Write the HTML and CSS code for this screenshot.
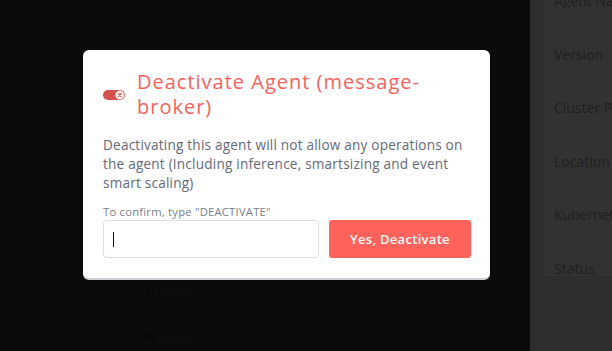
FILE: index.html
```html
<!DOCTYPE html>
<html>
<head>
<meta charset="utf-8">
<link rel="stylesheet" href="styles.css">
</head>
<body>
<div class="page">
  <main class="main">
    <div class="row"><span class="dot"></span><span class="bar"></span></div>
    <div class="row"><span class="dot"></span><span class="bar"></span></div>
  </main>
  <aside class="side">
    <div class="card">
      <div class="label first">Agent Name</div>
      <div class="label">Version</div>
      <div class="label">Cluster Provider</div>
      <div class="label">Location</div>
      <div class="label">Kubernetes</div>
      <div class="label">Status</div>
    </div>
  </aside>
</div>
<div class="modal">
  <div class="head">
    <svg class="toggle" width="22" height="10" viewBox="0 0 22 10">
      <rect x="0" y="0" width="22" height="10" rx="5" fill="#d64f4c"/>
      <circle cx="16.8" cy="5" r="4.3" fill="#fff" stroke="#f2c4c3" stroke-width="0.6"/>
      <path d="M15.3 3.5 L18.3 6.5 M18.3 3.5 L15.3 6.5" stroke="#e0504c" stroke-width="1.1" stroke-linecap="round"/>
    </svg>
    <h1 class="title">Deactivate Agent (message-broker)</h1>
  </div>
  <p class="desc">Deactivating this agent will not allow any operations on the agent (Including inference, smartsizing and event smart scaling)</p>
  <div class="confirm-label">To confirm, type "DEACTIVATE"</div>
  <div class="actions">
    <div class="input"><span class="caret"></span></div>
    <button class="btn">Yes, Deactivate</button>
  </div>
</div>
</body>
</html>
```

FILE: styles.css
```css
html, body {
  margin: 0;
  padding: 0;
}
body {
  width: 612px;
  height: 351px;
  overflow: hidden;
  background: #0b0b0b;
  font-family: "Open Sans", "Liberation Sans", sans-serif;
  position: relative;
}
.page {
  display: flex;
  height: 351px;
}
.main {
  flex: 1;
  padding: 288px 0 0 145px;
  display: flex;
  flex-direction: column;
  gap: 34px;
}
.row {
  display: flex;
  align-items: center;
  gap: 8px;
}
.dot {
  width: 10px;
  height: 10px;
  border-radius: 50%;
  background: #080808;
}
.bar {
  width: 28px;
  height: 3px;
  background: #0d0d0d;
}
.side {
  width: 82px;
  background: #2e2e2e;
  padding: 0 0 0 13px;
  box-sizing: border-box;
}
.card {
  background: #323232;
  height: 300px;
  margin-top: -24px;
  padding-left: 11px;
  padding-top: 15px;
  box-sizing: border-box;
  display: flex;
  flex-direction: column;
  gap: 36px;
}
.label {
  font-size: 14px;
  line-height: 19px;
  color: #1f1f1f;
  white-space: nowrap;
  overflow: hidden;
}
.modal {
  position: absolute;
  left: 83px;
  top: 50px;
  width: 407px;
  box-sizing: border-box;
  background: #fff;
  border-radius: 6px;
  border-bottom: 2px solid #cfd3d8;
  padding: 19px 19px 20px 20px;
}
.head {
  display: flex;
  align-items: center;
  gap: 12px;
}
.toggle {
  flex: none;
  margin-left: 0;
  margin-top: 2px;
}
.title {
  margin: 0;
  font-size: 20px;
  line-height: 25px;
  font-weight: 500;
  letter-spacing: 1px;
  color: #f5625c;
  width: 310px;
}
.desc {
  margin: 16px 0 0 0;
  font-size: 13.6px;
  line-height: 19px;
  letter-spacing: 0.2px;
  color: #656a78;
}
.confirm-label {
  margin-top: 13px;
  font-size: 11.2px;
  line-height: 13px;
  letter-spacing: 0.25px;
  color: #7a7e8a;
}
.actions {
  display: flex;
  gap: 10px;
  margin-top: 2px;
}
.input {
  width: 216px;
  height: 38px;
  box-sizing: border-box;
  border: 1px solid #dcdfe3;
  border-radius: 4px;
  display: flex;
  align-items: center;
  padding-left: 9px;
}
.caret {
  width: 1px;
  height: 15px;
  background: #111;
}
.btn {
  width: 142px;
  height: 38px;
  border: none;
  border-radius: 3px;
  background: #fd625b;
  color: #fff;
  font-family: "Open Sans", "Liberation Sans", sans-serif;
  font-size: 13px;
  font-weight: 600;
  letter-spacing: 0.3px;
  padding: 0;
}
```
